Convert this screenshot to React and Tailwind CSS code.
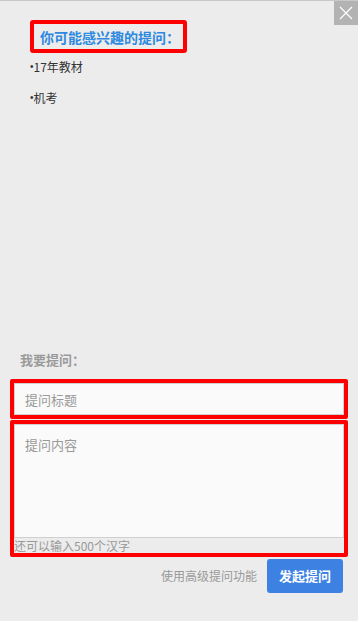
const font = { fontFamily: '"Microsoft YaHei", "Noto Sans CJK SC", "Noto Sans", sans-serif' };

const CloseButton = () => (
  <button className="absolute right-0 top-0 w-6 h-6 bg-[#b3b3b3] flex items-center justify-center">
    <svg width="14" height="14" viewBox="0 0 14 14">
      <path d="M1 1 L13 13 M13 1 L1 13" stroke="#ffffff" strokeWidth="1.2" fill="none" />
    </svg>
  </button>
);

const App = () => {
  const suggestions = ['17年教材', '机考'];

  return (
    <div
      className="relative h-[621px] w-[358px] bg-[#ececec] border-t border-[#c9c9c9] flex flex-col overflow-hidden"
      style={font}
    >
      <CloseButton />

      <div className="pl-[30px] pt-[19px]">
        <div className="inline-flex items-center h-[33px] w-[157px] border-4 border-[#ff0000] rounded-[3px] pl-[6px]">
          <span className="text-[14px] font-bold text-[#2d8ae0] leading-none">你可能感兴趣的提问：</span>
        </div>
        <ul className="mt-[4px] flex flex-col gap-[11px]">
          {suggestions.map((s) => (
            <li key={s} className="h-[20px] flex items-center text-[12px] text-[#333] leading-none">
              <span className="text-[10px]" style={{ fontFamily: '"Liberation Sans", sans-serif' }}>•</span>
              {s}
            </li>
          ))}
        </ul>
      </div>

      <div className="flex-1" />

      <div className="pb-[28px]">
        <div className="pl-[20px] h-[20px] flex items-center text-[13px] font-bold text-[#9a9a9a] mb-[9px]">
          我要提问：
        </div>

        <div className="mx-[10px] border-4 border-[#ff0000] rounded-[2px]">
          <input
            type="text"
            placeholder="提问标题"
            className="block w-full h-[32px] bg-[#fafafa] border border-[#cfcfcf] px-[10px] text-[13px] outline-none placeholder:text-[#999]"
            style={font}
          />
        </div>

        <div className="mx-[10px] mt-[1px] border-4 border-[#ff0000] rounded-[2px]">
          <textarea
            placeholder="提问内容"
            className="block w-full h-[114px] resize-none bg-[#fafafa] border border-[#cfcfcf] px-[10px] py-[10px] text-[13px] outline-none placeholder:text-[#999]"
            style={font}
          />
          <div className="h-[15px] text-[12px] leading-[15px] text-[#999]">还可以输入500个汉字</div>
        </div>

        <div className="mt-[2px] flex items-center justify-end pr-[15px] gap-[10px]">
          <span className="text-[12px] text-[#999]">使用高级提问功能</span>
          <button className="w-[76px] h-[34px] rounded-[3px] bg-[#3d82e3] text-white text-[13px] font-bold">
            发起提问
          </button>
        </div>
      </div>
    </div>
  );
};

export default App;
